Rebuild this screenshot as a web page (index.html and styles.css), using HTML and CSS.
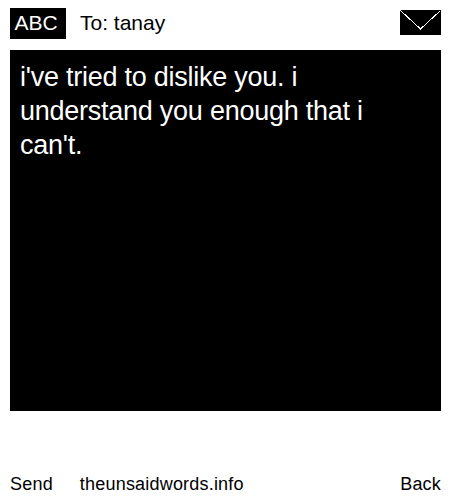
FILE: index.html
```html
<!DOCTYPE html>
<html lang="en">
<head>
    <meta charset="UTF-8">
    <title>The Unsaid Words</title>
    <link rel="stylesheet" href="styles.css">
</head>
<body>
    <div class="top-bar">
        <span class="mode">ABC</span>
        <span class="recipient">To: tanay</span>
        <svg class="envelope" width="41" height="25" viewBox="0 0 41 25">
            <rect width="41" height="25" fill="#000"/>
            <path d="M0.5 0.5 L20.5 19 L40.5 0.5" fill="none" stroke="#fff" stroke-width="1" shape-rendering="crispEdges"/>
        </svg>
    </div>

    <div class="message">i've tried to dislike you. i understand you enough that i can't.</div>

    <div class="bottom-bar">
        <span class="send">Send</span>
        <span class="site">theunsaidwords.info</span>
        <span class="back">Back</span>
    </div>
</body>
</html>
```

FILE: styles.css
```css
html, body {
    height: 100%;
}

body {
    margin: 0;
    padding: 8px 9px 5px 10px;
    box-sizing: border-box;
    display: flex;
    flex-direction: column;
    background-color: #ffffff;
    color: #000000;
    font-family: "Liberation Sans", Arial, sans-serif;
}

.top-bar {
    display: flex;
    align-items: flex-start;
    height: 31px;
    margin-bottom: 11px;
    font-size: 21px;
    line-height: 30px;
}

.mode {
    width: 56px;
    height: 31px;
    padding-right: 4px;
    box-sizing: border-box;
    text-align: center;
    background-color: #000000;
    color: #ffffff;
}

.recipient {
    margin-left: 14px;
}

.envelope {
    margin-left: auto;
    margin-top: 2px;
}

.message {
    height: 361px;
    box-sizing: border-box;
    padding: 10px;
    background-color: #000000;
    color: #ffffff;
    font-size: 27px;
    letter-spacing: -0.25px;
    line-height: 34px;
}

.bottom-bar {
    display: flex;
    margin-top: auto;
    font-size: 18px;
    letter-spacing: 0.2px;
    line-height: 21px;
}

.site {
    margin-left: 27px;
}

.back {
    margin-left: auto;
}
```
